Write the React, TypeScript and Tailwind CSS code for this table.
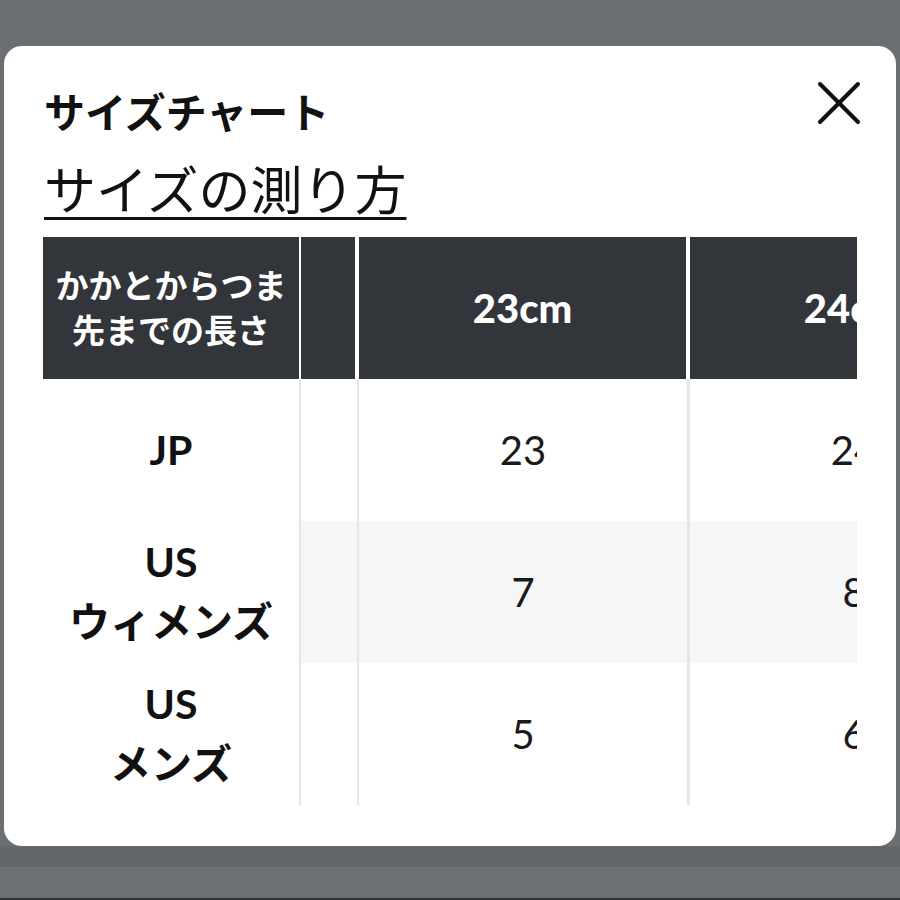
import React from 'react';

const font = { fontFamily: '"Lato", "Noto Sans CJK JP", sans-serif' };

// Column widths incl. right border
const cols = ['w-[258px]', 'w-[58px]', 'w-[331px]', 'w-[331px]'];

const headers = ['', '23cm', '24cm'];

const rows: { label: string[]; values: string[]; striped?: boolean }[] = [
  { label: ['JP'], values: ['23', '24'] },
  { label: ['US', 'ウィメンズ'], values: ['7', '8'], striped: true },
  { label: ['US', 'メンズ'], values: ['5', '6'] },
];

function CloseIcon() {
  return (
    <svg width="44" height="44" viewBox="0 0 44 44" fill="none" stroke="#111" strokeWidth="4" strokeLinecap="round">
      <path d="M3 3 L41 41" />
      <path d="M41 3 L3 41" />
    </svg>
  );
}

export default function App() {
  return (
    <div className="w-[900px] h-[900px] bg-[#6b6f74] flex flex-col overflow-hidden" style={font}>
      <div className="h-[46px] shrink-0" />

      {/* Modal */}
      <div className="ml-[4px] w-[892px] h-[800px] shrink-0 rounded-[18px] bg-white overflow-hidden pt-[35px]">
        {/* Title row */}
        <div className="flex items-start justify-between pl-[40px] pr-[35px]">
          <h2 className="mt-[8px] text-[41px] leading-[48px] font-bold text-[#111]">サイズチャート</h2>
          <button className="w-[44px] h-[44px]">
            <CloseIcon />
          </button>
        </div>

        {/* How to measure link */}
        <div className="pl-[40px] mt-[23px]">
          <a className="text-[52px] leading-[60px] font-normal text-[#111] underline decoration-[3px] underline-offset-[7px]">
            サイズの測り方
          </a>
        </div>

        {/* Table */}
        <div className="ml-[39px] mt-[17px] w-[814px] overflow-hidden">
          <div className="w-[978px]">
            {/* Header */}
            <div className="flex h-[142px]">
              <div className={`${cols[0]} shrink-0 bg-[#32353a] border-r-[2px] border-white flex flex-col items-center justify-center text-white font-bold text-[33px] leading-[45px]`}>
                <span>かかとからつま</span>
                <span>先までの長さ</span>
              </div>
              {headers.map((h, i) => (
                <div
                  key={i}
                  className={`${cols[i + 1]} shrink-0 bg-[#32353a] border-r-[4px] border-white flex items-center justify-center text-white font-black text-[40px]`}
                >
                  {h}
                </div>
              ))}
            </div>

            {/* Body */}
            {rows.map((r, ri) => (
              <div key={ri} className="flex h-[142px]">
                <div className={`${cols[0]} shrink-0 bg-white border-r-[2px] border-[#e5e6e8] flex flex-col items-center justify-center font-bold text-[41px] leading-[60px] text-[#111]`}>
                  {r.label.map((l) => (
                    <span key={l}>{l}</span>
                  ))}
                </div>
                <div className={`${cols[1]} shrink-0 border-r-[2px] border-[#e5e6e8] ${r.striped ? 'bg-[#f5f6f8]' : 'bg-white'}`} />
                {r.values.map((v, vi) => (
                  <div
                    key={vi}
                    className={`${cols[vi + 2]} shrink-0 border-r-[3px] border-[#e5e6e8] flex items-center justify-center text-[40px] text-[#1a1a1a] ${r.striped ? 'bg-[#f5f6f8]' : 'bg-white'}`}
                  >
                    {v}
                  </div>
                ))}
              </div>
            ))}
          </div>
        </div>
      </div>

      {/* Page bottom behind the overlay */}
      <div className="h-[21px] shrink-0 bg-[#62676c]" />
      <div className="h-[31px] shrink-0 bg-[#6c7175]" />
      <div className="flex-1 bg-[#2f3336]" />
    </div>
  );
}
